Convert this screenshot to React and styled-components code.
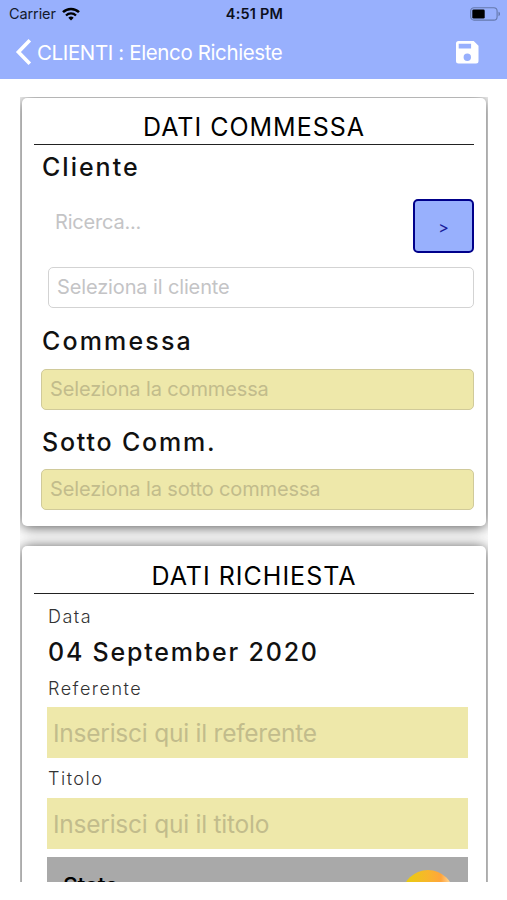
import React from "react";
import styled, { createGlobalStyle } from "styled-components";

function App() {
    return (
        <Screen>
            <GlobalStyle />
            <Header>
                <StatusBar>
                    <Carrier>
                        Carrier
                        <WifiIcon />
                    </Carrier>
                    <Clock>4:51 PM</Clock>
                    <BatteryIcon />
                </StatusBar>
                <NavBar>
                    <BackButton>
                        <svg width="17" height="28" viewBox="0 0 17 28" fill="none">
                            <path d="M14.8 2.2 3.4 14l11.4 11.8" stroke="#fff" strokeWidth="3.6" />
                        </svg>
                        <NavTitle>CLIENTI : Elenco Richieste</NavTitle>
                    </BackButton>
                    <SaveIcon />
                </NavBar>
            </Header>
            <Content>
                <Card>
                    <CardTitle>DATI COMMESSA</CardTitle>
                    <Label $margin="0 0 10px 8px" $spacing="2px">Cliente</Label>
                    <SearchRow>
                        <SearchText>Ricerca...</SearchText>
                        <SearchButton>&gt;</SearchButton>
                    </SearchRow>
                    <Select $plain>Seleziona il cliente</Select>
                    <Label $margin="11px 0 6px 8px" $spacing="2.15px">Commessa</Label>
                    <Select>Seleziona la commessa</Select>
                    <Label $margin="10px 0 5px 8px" $spacing="1.8px">Sotto Comm.</Label>
                    <Select>Seleziona la sotto commessa</Select>
                </Card>
                <Card>
                    <CardTitle>DATI RICHIESTA</CardTitle>
                    <Fields>
                        <Caption $height="45px">Data</Caption>
                        <DateValue>04 September 2020</DateValue>
                        <Caption $height="38px">Referente</Caption>
                        <Field>Inserisci qui il referente</Field>
                        <Caption $height="40px">Titolo</Caption>
                        <Field>Inserisci qui il titolo</Field>
                        <StatusRow>
                            <StatusLabel>Stato</StatusLabel>
                            <StatusDot />
                        </StatusRow>
                    </Fields>
                </Card>
            </Content>
        </Screen>
    );
}

function WifiIcon() {
    return (
        <svg width="18" height="14" viewBox="0 0 18 14" fill="none" stroke="#000">
            <path d="M1 5.2a11.3 11.3 0 0 1 16 0" strokeWidth="2.5" />
            <path d="M4 8.5a7.1 7.1 0 0 1 10 0" strokeWidth="2.3" />
            <path d="M9 13.4 6.3 10.7a3.9 3.9 0 0 1 5.4 0z" fill="#000" stroke="none" />
        </svg>
    );
}

function BatteryIcon() {
    return (
        <svg width="31" height="14" viewBox="0 0 31 14">
            <rect x="0.7" y="0.7" width="26.4" height="12.4" rx="3.4" fill="none" stroke="#6478ad" strokeWidth="1.1" />
            <rect x="2.3" y="2.4" width="12.4" height="9.2" rx="1.4" fill="#000" />
            <path d="M28.5 4.8c2 .5 2 3.9 0 4.4z" fill="#6478ad" />
        </svg>
    );
}

function SaveIcon() {
    return (
        <svg width="23" height="23" viewBox="0 0 23 23">
            <path
                fill="#fff"
                fillRule="evenodd"
                d="M2.5 0H17.7L22.5 4.8V20a2.5 2.5 0 0 1-2.5 2.5H2.5A2.5 2.5 0 0 1 0 20V2.5A2.5 2.5 0 0 1 2.5 0ZM2.7 2.7V7.6H15.1V2.7ZM11.3 12.6a3.7 3.7 0 1 0 0 7.4a3.7 3.7 0 0 0 0-7.4Z"
            />
        </svg>
    );
}

// Style :
const GlobalStyle = createGlobalStyle`
    * {
        box-sizing: border-box;
    }

    body {
        margin: 0;
        background: #fff;
        font-family: Inter, "Liberation Sans", sans-serif;
    }
`;

const Screen = styled.div`
    display: flex;
    flex-direction: column;
    width: 507px;
    height: 900px;
    overflow: hidden;
    background: #fff;
    white-space: nowrap;
`;

const Header = styled.header`
    height: 79px;
    background: #98b0fd;
`;

const StatusBar = styled.div`
    display: grid;
    grid-template-columns: 1fr auto 1fr;
    align-items: center;
    height: 27px;
    padding: 0 7px 0 9px;

    > svg {
        justify-self: end;
        margin-right: -1px;
    }
`;

const Carrier = styled.div`
    display: flex;
    align-items: center;
    gap: 6px;
    font-size: 14.5px;
    letter-spacing: -0.1px;
    color: #151a2c;
`;

const Clock = styled.div`
    font-size: 14.5px;
    font-weight: 600;
    letter-spacing: 0.2px;
    color: #0c0f1c;
`;

const NavBar = styled.div`
    display: flex;
    align-items: center;
    justify-content: space-between;
    height: 50px;
    padding: 0 28px 0 15px;
`;

const BackButton = styled.div`
    display: flex;
    align-items: center;
    gap: 5px;
`;

const NavTitle = styled.div`
    font-size: 20.5px;
    letter-spacing: -0.38px;
    color: #fff;
`;

const Content = styled.main`
    display: flex;
    flex-direction: column;
    gap: 20px;
    width: 468px;
    height: 785px;
    margin: 18px 0 0 20px;
    padding: 1px 2px 0;
    overflow: hidden;
`;

const Card = styled.section`
    flex: none;
    padding: 12px 12px 16px;
    background: #fff;
    border-radius: 5px;
    box-shadow: 0 1px 14px rgba(0, 0, 0, 0.7);

    & + & {
        padding-top: 13px;
    }
`;

const CardTitle = styled.h2`
    height: 35px;
    margin: 0;
    border-bottom: 1px solid #222;
    font-size: 25px;
    font-weight: 400;
    line-height: 34px;
    letter-spacing: 1px;
    text-align: center;
    color: #000;
`;

const Label = styled.div`
    margin: ${(props) => props.$margin};
    font-size: 25px;
    font-weight: 500;
    line-height: 44px;
    letter-spacing: ${(props) => props.$spacing};
    color: #111;
`;

const SearchRow = styled.div`
    display: flex;
    justify-content: space-between;
    height: 54px;
    margin-bottom: 14px;
    padding-left: 21px;
`;

const SearchText = styled.div`
    font-size: 20px;
    line-height: 46px;
    letter-spacing: -0.2px;
    color: #c4c4c6;
`;

const SearchButton = styled.button`
    width: 61px;
    height: 54px;
    padding: 2px 0 0;
    border: 2px solid #00008b;
    border-radius: 5px;
    background: #98b0fd;
    font-family: inherit;
    font-size: 16px;
    color: #1a1a99;
`;

const Select = styled.div`
    height: 41px;
    margin-left: ${(props) => (props.$plain ? "14px" : "7px")};
    padding-left: 8px;
    border: 1px solid ${(props) => (props.$plain ? "#d3d3d3" : "#d0ca9a")};
    border-radius: 5px;
    background: ${(props) => (props.$plain ? "#fff" : "#eee8aa")};
    font-size: 20px;
    line-height: 39px;
    letter-spacing: -0.13px;
    color: ${(props) => (props.$plain ? "#c4c4c6" : "#c2bc8c")};
`;

const Fields = styled.div`
    padding: 0 6px 0 13px;
`;

const Caption = styled.div`
    height: ${(props) => props.$height};
    padding-left: 1px;
    font-size: 18px;
    font-weight: 300;
    line-height: calc(${(props) => props.$height} + 1px);
    letter-spacing: 1.5px;
    color: #333;
`;

const DateValue = styled.div`
    height: 30px;
    margin: -2px 0 2px;
    padding-left: 1px;
    font-size: 25px;
    font-weight: 500;
    line-height: 30px;
    letter-spacing: 1.8px;
    color: #111;
`;

const Field = styled.div`
    height: 51px;
    padding-left: 6px;
    background: #eee8aa;
    font-size: 24.5px;
    line-height: 52px;
    letter-spacing: -0.24px;
    color: #c2bc8c;
`;

const StatusRow = styled.div`
    display: flex;
    justify-content: space-between;
    height: 80px;
    margin-top: 8px;
    padding: 13px 14px 0 16px;
    background: #a9a9a9;
`;

const StatusLabel = styled.div`
    font-size: 23px;
    font-weight: 500;
    line-height: 32px;
    letter-spacing: -0.4px;
    color: #000;
`;

const StatusDot = styled.div`
    width: 52px;
    height: 52px;
    border-radius: 50%;
    background: linear-gradient(90deg, #e8cc10 8%, #f8b62c 50%, #ffa53c 75%, #ffe0a8 96%);
`;

export default App;
